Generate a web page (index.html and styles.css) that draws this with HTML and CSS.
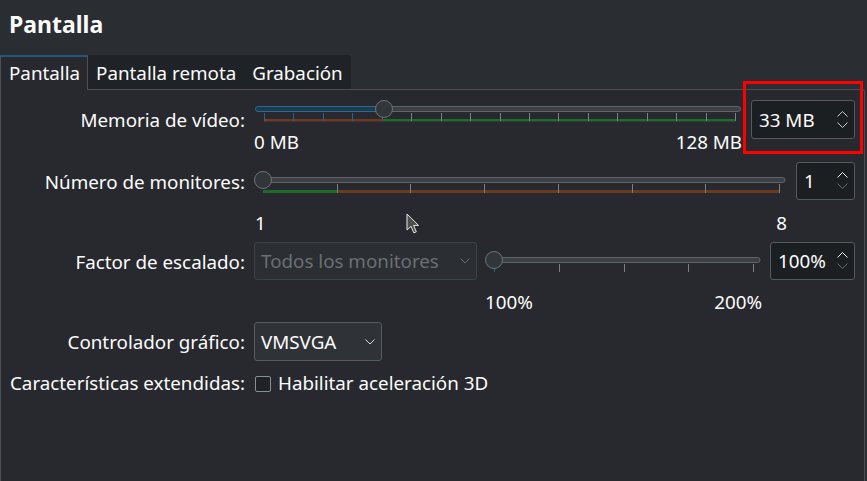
FILE: index.html
```html
<!DOCTYPE html>
<html lang="es">
<head>
<meta charset="utf-8">
<title>Pantalla</title>
<link rel="stylesheet" href="styles.css">
</head>
<body>
<div class="window">
  <div class="title">Pantalla</div>
  <div class="tabbar">
    <div class="tab active">Pantalla</div>
    <div class="tabs-inactive">
      <div class="tab">Pantalla remota</div>
      <div class="tab">Grabación</div>
    </div>
  </div>
  <div class="pane">
    <div class="form">
      <div class="label">Memoria de vídeo:</div>
      <div class="field gap9">
        <div class="slider w488">
          <svg class="track" width="488" height="24" viewBox="0 0 488 24">
            <rect x="130" y="8.5" width="356.5" height="5" rx="2.5" fill="#3c4045" stroke="#60646a"/>
            <rect x="1.5" y="8.5" width="130" height="5" rx="2.5" fill="#1d3b4f" stroke="#2c6a8e"/>
            <rect x="10" y="21" width="3" height="2.5" fill="#b3261e"/>
            <rect x="13" y="21" width="117" height="2.5" fill="#6b3a22"/>
            <rect x="130" y="21" width="351" height="2.5" fill="#1e6a2a"/>
            <path d="M10.5 15V23M39.5 15V23M69.5 15V23M98.5 15V23M128.5 15V23" stroke="#2a6485"/>
            <path d="M157.5 15V23M187.5 15V23M216.5 15V23M246.5 15V23M275.5 15V23M304.5 15V23M334.5 15V23M363.5 15V23M393.5 15V23M422.5 15V23M452.5 15V23M481.5 15V23" stroke="#7c8085"/>
            <circle cx="130" cy="11" r="8.5" fill="#31363b" stroke="#6f7378"/>
          </svg>
          <div class="scale mt8"><span>0 MB</span><span>128 MB</span></div>
        </div>
        <div class="spin w104 h39">
          <span>33 MB</span>
          <svg width="11" height="18" viewBox="0 0 11 18"><path d="M0.5 5.5L5.5 0.5L10.5 5.5" fill="none" stroke="#c9cbcd"/><path d="M0.5 11.5L5.5 16.5L10.5 11.5" fill="none" stroke="#c9cbcd"/></svg>
        </div>
      </div>

      <div class="label">Número de monitores:</div>
      <div class="field gap9">
        <div class="slider w533">
          <svg class="track" width="533" height="34" viewBox="0 0 533 34">
            <rect x="9" y="17.5" width="522" height="5" rx="2.5" fill="#3c4045" stroke="#60646a"/>
            <rect x="9" y="30" width="74" height="3" fill="#1e6a2a"/>
            <rect x="83" y="30" width="442" height="3" fill="#6b3a22"/>
            <path d="M83.5 24V33M156.5 24V33M230.5 24V33M304.5 24V33M378.5 24V33M451.5 24V33M525.5 24V33" stroke="#7c8085"/>
            <circle cx="9" cy="20" r="8.5" fill="#31363b" stroke="#6f7378"/>
          </svg>
          <div class="scale mt17"><span class="one">1</span><span>8</span></div>
        </div>
        <div class="spin w59 h38">
          <span>1</span>
          <svg width="11" height="18" viewBox="0 0 11 18"><path d="M0.5 5.5L5.5 0.5L10.5 5.5" fill="none" stroke="#eff0f1"/><path d="M0.5 11.5L5.5 16.5L10.5 11.5" fill="none" stroke="#676b70"/></svg>
        </div>
      </div>

      <div class="label">Factor de escalado:</div>
      <div class="field gap8">
        <div class="combo disabled w223 h38">
          <span>Todos los monitores</span>
          <svg width="10" height="6" viewBox="0 0 10 6"><path d="M0.5 0.5L5 5L9.5 0.5" fill="none" stroke="#6a6d71"/></svg>
        </div>
        <div class="slider w277">
          <svg class="track" width="277" height="36" viewBox="0 0 277 36">
            <rect x="9" y="17.5" width="266" height="5" rx="2.5" fill="#3c4045" stroke="#60646a"/>
            <path d="M9.5 27V32" stroke="#2a6485"/>
            <path d="M74.5 24V32M139.5 24V32M203.5 24V32M268.5 24V32" stroke="#7c8085"/>
            <circle cx="9" cy="20" r="8.5" fill="#31363b" stroke="#6f7378"/>
          </svg>
          <div class="scale mt14"><span>100%</span><span>200%</span></div>
        </div>
        <div class="spin w85 h38">
          <span>100%</span>
          <svg width="11" height="18" viewBox="0 0 11 18"><path d="M0.5 5.5L5.5 0.5L10.5 5.5" fill="none" stroke="#eff0f1"/><path d="M0.5 11.5L5.5 16.5L10.5 11.5" fill="none" stroke="#676b70"/></svg>
        </div>
      </div>

      <div class="label">Controlador gráfico:</div>
      <div class="field">
        <div class="combo w128 h39">
          <span>VMSVGA</span>
          <svg width="10" height="6" viewBox="0 0 10 6"><path d="M0.5 0.5L5 5L9.5 0.5" fill="none" stroke="#d8d9da"/></svg>
        </div>
      </div>

      <div class="label short">Características extendidas:</div>
      <div class="field check-row">
        <span class="checkbox"></span>
        <span class="check-text">Habilitar aceleración 3D</span>
      </div>
    </div>
  </div>
  <div class="highlight"></div>
  <svg class="cursor" width="14" height="22" viewBox="0 0 14 22"><path d="M1 1L1 17L5 13.3L7.8 19.8L10.3 18.8L7.6 12.4L12.6 12.4Z" fill="#4d4d4d" stroke="#e8e8e8" stroke-width="1" stroke-linejoin="round"/></svg>
</div>
</body>
</html>
```

FILE: styles.css
```css
* { box-sizing: border-box; }

html, body {
  margin: 0;
  padding: 0;
  background: #2a2d32;
}

body {
  width: 867px;
  height: 481px;
  overflow: hidden;
  font-family: "Noto Sans", sans-serif;
  font-size: 18.8px;
  color: #fcfcfc;
}

.window {
  position: relative;
  width: 867px;
  height: 481px;
}

.title {
  height: 55px;
  padding: 8px 9px 0;
  font-size: 23px;
  font-weight: bold;
  line-height: 32px;
}

.tabbar {
  display: flex;
  align-items: flex-start;
  height: 34px;
  width: 865px;
}

.tab {
  height: 34px;
  padding: 6px 8px 0;
  line-height: 24px;
  white-space: nowrap;
}

.tab.active {
  position: relative;
  z-index: 1;
  height: 35px;
  margin-bottom: -1px;
  padding: 4px 7px 0 8px;
  background: #27292e;
  border-top: 2px solid #22587a;
  border-left: 1px solid #4c5055;
  border-right: 1px solid #4c5055;
}

.tabs-inactive {
  display: flex;
  background: #1f2226;
  border-top-right-radius: 4px;
}

.pane {
  width: 865px;
  height: 392px;
  background: #27292e;
  border: 1px solid #4c5055;
  border-bottom: none;
  border-top-right-radius: 3px;
}

.form {
  display: grid;
  grid-template-columns: 236px 601px;
  grid-template-rows: 62px 80px 80px 49px auto;
  column-gap: 9px;
  padding: 8px 0 0 8px;
}

.label {
  text-align: right;
  white-space: nowrap;
  line-height: 38px;
  padding-top: 3px;
}

.label.short {
  line-height: 24px;
  padding-top: 2px;
}

.field {
  display: flex;
  align-items: flex-start;
}

.gap9 { gap: 9px; }
.gap8 { gap: 8px; }

.slider { display: flex; flex-direction: column; }
.track { display: block; }
.w488 { width: 488px; }
.w533 { width: 533px; }
.w277 { width: 277px; }

.scale {
  display: flex;
  justify-content: space-between;
  line-height: 24px;
  white-space: nowrap;
}
.scale .one { padding-left: 1px; }
.mt8 { margin-top: 8px; }
.mt17 { margin-top: 17px; }
.mt14 { margin-top: 14px; }

.spin {
  display: flex;
  align-items: center;
  justify-content: space-between;
  margin-top: 2px;
  padding: 0 6px 0 7px;
  background: #1c1f22;
  border: 1px solid #565a5f;
  border-radius: 3px;
  line-height: 24px;
  white-space: nowrap;
}
.spin svg, .combo svg { display: block; flex: none; }

.w104 { width: 104px; }
.w59 { width: 59px; }
.w85 { width: 85px; }
.w223 { width: 223px; }
.w128 { width: 128px; }
.h39 { height: 39px; }
.h38 { height: 38px; }

.combo {
  display: flex;
  align-items: center;
  justify-content: space-between;
  margin-top: 2px;
  padding: 0 6px 0 6px;
  background: #2f3338;
  border: 1px solid #585c61;
  border-radius: 3px;
  line-height: 24px;
  white-space: nowrap;
}

.combo.disabled {
  background: #2b2e33;
  border-color: #3e4247;
  color: #6c6f73;
}

.check-row { align-items: flex-start; }

.checkbox {
  width: 16px;
  height: 16px;
  margin: 7px 0 0 1px;
  background: #1f2226;
  border: 1px solid #8a8d91;
  border-radius: 2px;
  flex: none;
}

.check-text {
  margin-left: 7px;
  padding-top: 2px;
  line-height: 24px;
  white-space: nowrap;
}

.highlight {
  position: absolute;
  left: 743px;
  top: 81px;
  width: 120px;
  height: 73px;
  border: 3px solid #ff0000;
  pointer-events: none;
}

.cursor {
  position: absolute;
  left: 406px;
  top: 213px;
}
```
